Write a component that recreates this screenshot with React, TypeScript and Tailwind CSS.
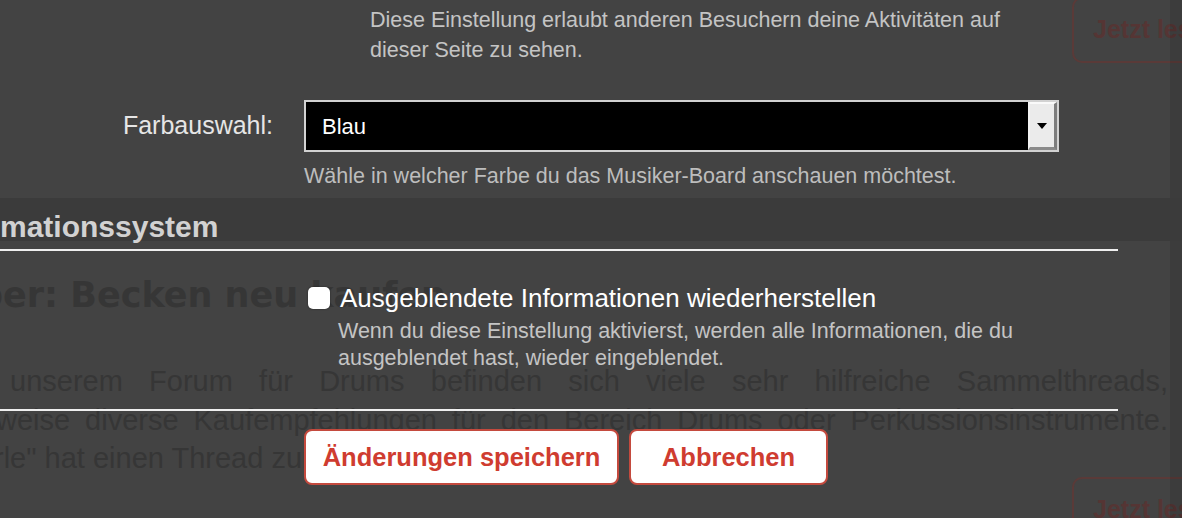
import React from "react";

function GhostButton({ className }: { className?: string }) {
  return (
    <div
      className={
        "ml-[1072px] w-[170px] shrink-0 rounded-[10px] border-2 border-[#5a3a38] flex items-center pl-[19px] text-[25px] font-bold text-[#553534] " +
        (className ?? "")
      }
    >
      Jetzt lesen
    </div>
  );
}

export default function App() {
  return (
    <div
      className="relative w-[1182px] h-[518px] overflow-hidden bg-[#434343]"
      style={{ fontFamily: '"Liberation Sans", Arial, sans-serif' }}
    >
      {/* Background page */}
      <div className="flex flex-col text-[#363636]">
        <GhostButton className="h-[66px] mt-[-3px]" />
        <h2
          className="mt-[212px] ml-[-22px] h-[40px] text-[35px] leading-[40px] font-bold whitespace-nowrap"
          style={{ fontFamily: '"DejaVu Sans", sans-serif' }}
        >
          ber: Becken neu kaufen
        </h2>
        <div className="mt-[47px] w-[1168px] text-[29px] leading-[38.5px]">
          <p className="pl-[10px] text-justify [text-align-last:justify]">
            unserem Forum für Drums befinden sich viele sehr hilfreiche Sammelthreads,
          </p>
          <p className="ml-[-4px] text-justify [text-align-last:justify]">
            weise diverse Kaufempfehlungen für den Bereich Drums oder Perkussionsinstrumente.
          </p>
          <p className="ml-[-6px] whitespace-nowrap">rle" hat einen Thread zum Beckenkauf erstellt</p>
        </div>
        <GhostButton className="h-[66px] mt-[-1px]" />
      </div>

      {/* right dim strip */}
      <div className="absolute top-0 right-0 bottom-0 w-[12px] bg-black/10" />

      {/* Modal overlay */}
      <div className="absolute inset-0 flex flex-col">
        <p className="ml-[370px] mt-[5px] text-[21.5px] leading-[30px] text-[#c4c4c4] whitespace-nowrap">
          Diese Einstellung erlaubt anderen Besuchern deine Aktivitäten auf
          <br />
          dieser Seite zu sehen.
        </p>

        <div className="mt-[35px] flex items-center h-[52px]">
          <label className="w-[273px] shrink-0 text-right text-[25px] text-[#e6e6e6]">Farbauswahl:</label>
          <div className="ml-[31px] w-[755px] h-[52px] shrink-0 border-2 border-[#d2d2d2] bg-black flex">
            <span className="flex-1 pl-[16px] flex items-center text-[22px] text-white">Blau</span>
            <span className="w-[29px] flex items-center justify-center bg-[#ebebeb] border-t-2 border-l-2 border-t-[#fafafa] border-l-[#f4f4f4] border-r-[3px] border-b-[3px] border-r-[#7d7d7d] border-b-[#8a8a8a]">
              <span className="block w-0 h-0 border-l-[5px] border-r-[5px] border-t-[6px] border-l-transparent border-r-transparent border-t-black" />
            </span>
          </div>
        </div>

        <p className="ml-[304px] mt-[10px] text-[21.5px] leading-[28px] text-[#bdbdbd] whitespace-nowrap">
          Wähle in welcher Farbe du das Musiker-Board anschauen möchtest.
        </p>

        <div className="mt-[8px] h-[43px] bg-[#3b3b3b] flex items-end">
          <h3 className="text-[30px] leading-[28px] font-bold text-[#d2d2d2] whitespace-nowrap">mationssystem</h3>
        </div>

        <div className="mt-[8px] h-[2px] w-[1118px] bg-[#efefef]" />

        <div className="mt-[33px] ml-[308px] flex items-start">
          <span className="mt-[3px] w-[22px] h-[22px] rounded-[5px] bg-white shadow-[0_0_2px_rgba(0,0,0,0.5)] shrink-0" />
          <label className="ml-[10px] text-[26px] leading-[28px] text-white whitespace-nowrap">
            Ausgeblendete Informationen wiederherstellen
          </label>
        </div>

        <p className="ml-[338px] mt-[5.5px] text-[21.5px] leading-[27px] text-[#c4c4c4] whitespace-nowrap">
          Wenn du diese Einstellung aktivierst, werden alle Informationen, die du
          <br />
          ausgeblendet hast, wieder eingeblendet.
        </p>

        <div className="mt-[37.5px] h-[2px] w-[1118px] bg-[#efefef]" />

        <div className="mt-[18px] ml-[304px] flex gap-[10px]">
          <button className="w-[315px] h-[56px] rounded-[8px] border-2 border-[#c44a3e] bg-white text-[25.5px] font-bold text-[#cf3c30]">
            Änderungen speichern
          </button>
          <button className="w-[199px] h-[56px] rounded-[8px] border-2 border-[#c44a3e] bg-white text-[25.5px] font-bold text-[#cf3c30]">
            Abbrechen
          </button>
        </div>
      </div>
    </div>
  );
}
